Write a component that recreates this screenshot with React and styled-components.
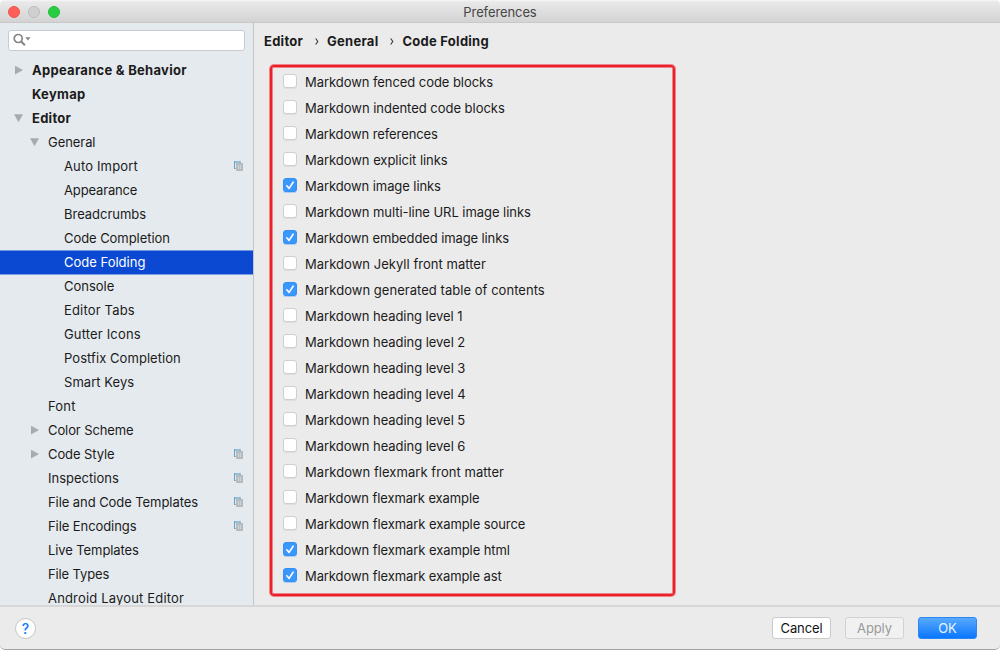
import React from "react";
import styled, { createGlobalStyle } from "styled-components";

const GlobalStyle = createGlobalStyle`
  * { box-sizing: border-box; }
  html, body { margin: 0; padding: 0; background: #fff; overflow: hidden; }
`;

const Window = styled.div`
  width: 1000px;
  height: 650px;
  display: flex;
  flex-direction: column;
  overflow: hidden;
  background: #ebebeb;
  border-radius: 5px;
  border-bottom: 1px solid #a3a3a3;
  font-family: Inter, "Liberation Sans", sans-serif;
  font-size: 13px;
  color: #1b1b1b;
`;

const TitleBar = styled.header`
  height: 23px;
  flex: none;
  display: grid;
  grid-template-columns: 1fr auto 1fr;
  align-items: center;
  padding: 0 8px;
  background: linear-gradient(#f6f6f6 0, #e9e9e9 2px, #d3d3d3 100%);
  border-bottom: 1px solid #c8c8c8;
`;

const Lights = styled.div`
  display: flex;
  gap: 8px;
`;

const Light = styled.span`
  width: 12px;
  height: 12px;
  border-radius: 50%;
  background: ${(p) => p.$color};
  border: 1px solid ${(p) => p.$edge};
`;

const Title = styled.div`
  color: #464646;
  line-height: 22px;
  padding-top: 1px;
  letter-spacing: -0.1px;
`;

const Body = styled.div`
  height: 582px;
  flex: none;
  display: flex;
`;

const Sidebar = styled.aside`
  width: 254px;
  flex: none;
  overflow: hidden;
  background: #e5eaee;
  border-right: 1px solid #c3c5c7;
`;

const Search = styled.div`
  height: 21px;
  margin: 7px 8px 7px;
  padding: 1px 4px;
  display: flex;
  background: #fff;
  border: 1px solid #c8ccd0;
  border-radius: 3px;
`;

const Row = styled.div`
  height: 24px;
  display: flex;
  align-items: center;
  padding: 0 9px 0 ${(p) => 13 + p.$level * 16}px;
  font-weight: ${(p) => (p.$level === 0 ? 700 : 400)};
  color: ${(p) => (p.$selected ? "#fff" : "#1b1b1b")};
  background: ${(p) => (p.$selected ? "#0b49d3" : "transparent")};
  box-shadow: ${(p) => (p.$selected ? "inset 0 1px 0 #6f96e2, 0 1px 0 #7b9ee3" : "none")};
`;

const Arrow = styled.svg`
  width: 11px;
  height: 11px;
  margin-right: 8px;
  flex: none;
  fill: #a9abad;
`;

const Label = styled.span`
  white-space: nowrap;
  letter-spacing: ${(p) => p.$spacing}px;
`;

const RowLabel = styled(Label)`
  flex: 1;
`;

const CopyGlyph = styled.svg`
  width: 11px;
  height: 11px;
  margin-bottom: 1px;
  flex: none;
`;

const Content = styled.main`
  flex: 1;
  padding: 7px 0 0 10px;
`;

const Breadcrumbs = styled.nav`
  height: 22px;
  display: flex;
  align-items: center;
  font-weight: 700;
  letter-spacing: 0.26px;
`;

const Separator = styled.svg`
  width: 4px;
  height: 7px;
  margin: 0 8.5px 0 11.5px;
  fill: none;
  stroke: #333;
  stroke-width: 1.1;
`;

const Options = styled.section`
  width: 405px;
  height: 531px;
  margin: 13px 0 0 6px;
  padding: 2px 0 0 11px;
  border: 2px solid #ed2029;
  border-radius: 4px;
  box-shadow: 0 0 0 1px rgba(237, 32, 41, 0.5), inset 0 0 0 1px rgba(237, 32, 41, 0.5);
`;

const Option = styled.label`
  height: 26px;
  display: flex;
  align-items: center;
  gap: 8px;
`;

const Box = styled.span`
  width: 14px;
  height: 14px;
  margin-bottom: 2px;
  flex: none;
  display: flex;
  border-radius: 3px;
  background: ${(p) => (p.$checked ? "#3a97fc" : "#fff")};
  border: 1px solid ${(p) => (p.$checked ? "#3490f6" : "#cfcfcf")};
  box-shadow: 0 1px 0 ${(p) => (p.$checked ? "rgba(58, 151, 252, 0.35)" : "rgba(0, 0, 0, 0.06)")};
`;

const Footer = styled.footer`
  flex: 1;
  display: flex;
  align-items: center;
  gap: 14px;
  padding: 0 23px 0 15px;
  border-top: 2px solid #d7d7d7;
`;

const Help = styled.button`
  width: 21px;
  height: 21px;
  padding: 0;
  margin-right: auto;
  border-radius: 50%;
  border: 1px solid #c5c5c5;
  background: #fff;
  color: #087cff;
  font: 500 14px/19px Inter, sans-serif;
`;

const Button = styled.button`
  width: 59px;
  height: 22px;
  padding: 0;
  border-radius: 3px;
  font: 400 13px/20px Inter, sans-serif;
  letter-spacing: -0.1px;
  border: 1px solid ${(p) => (p.$kind === "primary" ? "#2b87f4" : p.$kind === "disabled" ? "#d2d2d2" : "#c9c9c9")};
  color: ${(p) => (p.$kind === "primary" ? "#e8f3ff" : p.$kind === "disabled" ? "#9a9a9a" : "#141414")};
  background: ${(p) => (p.$kind === "primary" ? "linear-gradient(#58aafc, #0a76ff)" : p.$kind === "disabled" ? "#f1f1f1" : "#fff")};
`;

const tree = [
  { text: "Appearance & Behavior", level: 0, spacing: 0.28, arrow: "right" },
  { text: "Keymap", level: 0, spacing: 0.28 },
  { text: "Editor", level: 0, spacing: 0.26, arrow: "down" },
  { text: "General", level: 1, spacing: -0.06, arrow: "down" },
  { text: "Auto Import", level: 2, spacing: 0.15, copy: true },
  { text: "Appearance", level: 2, spacing: -0.15 },
  { text: "Breadcrumbs", level: 2, spacing: -0.02 },
  { text: "Code Completion", level: 2, spacing: -0.06 },
  { text: "Code Folding", level: 2, spacing: 0, selected: true },
  { text: "Console", level: 2, spacing: -0.02 },
  { text: "Editor Tabs", level: 2, spacing: 0.17 },
  { text: "Gutter Icons", level: 2, spacing: 0.16 },
  { text: "Postfix Completion", level: 2, spacing: 0.06 },
  { text: "Smart Keys", level: 2, spacing: 0.04 },
  { text: "Font", level: 1, spacing: 0.2 },
  { text: "Color Scheme", level: 1, spacing: -0.1, arrow: "right" },
  { text: "Code Style", level: 1, spacing: -0.1, arrow: "right", copy: true },
  { text: "Inspections", level: 1, spacing: 0, copy: true },
  { text: "File and Code Templates", level: 1, spacing: -0.07, copy: true },
  { text: "File Encodings", level: 1, spacing: -0.08, copy: true },
  { text: "Live Templates", level: 1, spacing: -0.09 },
  { text: "File Types", level: 1, spacing: -0.13 },
  { text: "Android Layout Editor", level: 1, spacing: 0.17 },
];

const options = [
  { name: "fenced code blocks", spacing: -0.06 },
  { name: "indented code blocks", spacing: -0.03 },
  { name: "references", spacing: -0.09 },
  { name: "explicit links", spacing: -0.04 },
  { name: "image links", spacing: -0.08, checked: true },
  { name: "multi-line URL image links", spacing: -0.05 },
  { name: "embedded image links", spacing: -0.11, checked: true },
  { name: "Jekyll front matter", spacing: 0.03 },
  { name: "generated table of contents", spacing: 0.04, checked: true },
  { name: "heading level 1", spacing: -0.06 },
  { name: "heading level 2", spacing: -0.05 },
  { name: "heading level 3", spacing: -0.05 },
  { name: "heading level 4", spacing: -0.06 },
  { name: "heading level 5", spacing: -0.05 },
  { name: "heading level 6", spacing: -0.05 },
  { name: "flexmark front matter", spacing: 0.05 },
  { name: "flexmark example", spacing: -0.11 },
  { name: "flexmark example source", spacing: -0.08 },
  { name: "flexmark example html", spacing: -0.08, checked: true },
  { name: "flexmark example ast", spacing: -0.09, checked: true },
];

function CopyIcon() {
  return (
    <CopyGlyph viewBox="0 0 11 11" shapeRendering="crispEdges">
      <path d="M1 1h7v2H1z" fill="#93c0d8" />
      <path d="M1 1h1v8H1z" fill="#5ea3c8" />
      <path d="M2 8h1v1H2z" fill="#93c0d8" />
      <path d="M3 3h7v8H3z" fill="#b7b9bb" />
      <path d="M5 5h3v4H5z" fill="#d3d6d8" />
      <path d="M6 5h1v4H6z" fill="#bcbfc1" />
    </CopyGlyph>
  );
}

export default function App() {
  return (
    <>
      <GlobalStyle />
      <Window>
        <TitleBar>
          <Lights>
            <Light $color="#ff5f57" $edge="#ee554e" />
            <Light $color="#d0d0d0" $edge="#bdbdbd" />
            <Light $color="#28cd41" $edge="#24be3b" />
          </Lights>
          <Title>Preferences</Title>
        </TitleBar>
        <Body>
          <Sidebar>
            <Search>
              <svg width="20" height="16" viewBox="0 0 20 16">
                <circle cx="5.2" cy="6.5" r="4" fill="none" stroke="#858585" strokeWidth="1.7" />
                <path d="M8.2 9.5l3.7 3.7" stroke="#858585" strokeWidth="2.1" />
                <path d="M12.3 5.3h5.2l-2.6 3.2z" fill="#858585" />
              </svg>
            </Search>
            {tree.map((item) => (
              <Row key={item.text} $level={item.level} $selected={item.selected}>
                <Arrow viewBox="0 0 11 11">
                  {item.arrow === "right" && <path d="M2 .8v8.6l8-4.3z" />}
                  {item.arrow === "down" && <path d="M1 1.2h9L5.5 9.2z" />}
                </Arrow>
                <RowLabel $spacing={item.spacing}>{item.text}</RowLabel>
                {item.copy && <CopyIcon />}
              </Row>
            ))}
          </Sidebar>
          <Content>
            <Breadcrumbs>
              <span>Editor</span>
              <Separator viewBox="0 0 4 7"><path d="M.7.5l2.1 3L.7 6.5" /></Separator>
              <span>General</span>
              <Separator viewBox="0 0 4 7"><path d="M.7.5l2.1 3L.7 6.5" /></Separator>
              <span>Code Folding</span>
            </Breadcrumbs>
            <Options>
              {options.map(({ name, spacing, checked }) => (
                <Option key={name}>
                  <Box $checked={checked}>
                    {checked && (
                      <svg width="12" height="12" viewBox="0 0 12 12" fill="none">
                        <path d="M2.8 6.8l2.3 2.6 4-6.2" stroke="#fff" strokeWidth="1.6" strokeLinecap="round" strokeLinejoin="round" />
                      </svg>
                    )}
                  </Box>
                  <Label $spacing={spacing}>Markdown {name}</Label>
                </Option>
              ))}
            </Options>
          </Content>
        </Body>
        <Footer>
          <Help>?</Help>
          <Button>Cancel</Button>
          <Button $kind="disabled">Apply</Button>
          <Button $kind="primary">OK</Button>
        </Footer>
      </Window>
    </>
  );
}
